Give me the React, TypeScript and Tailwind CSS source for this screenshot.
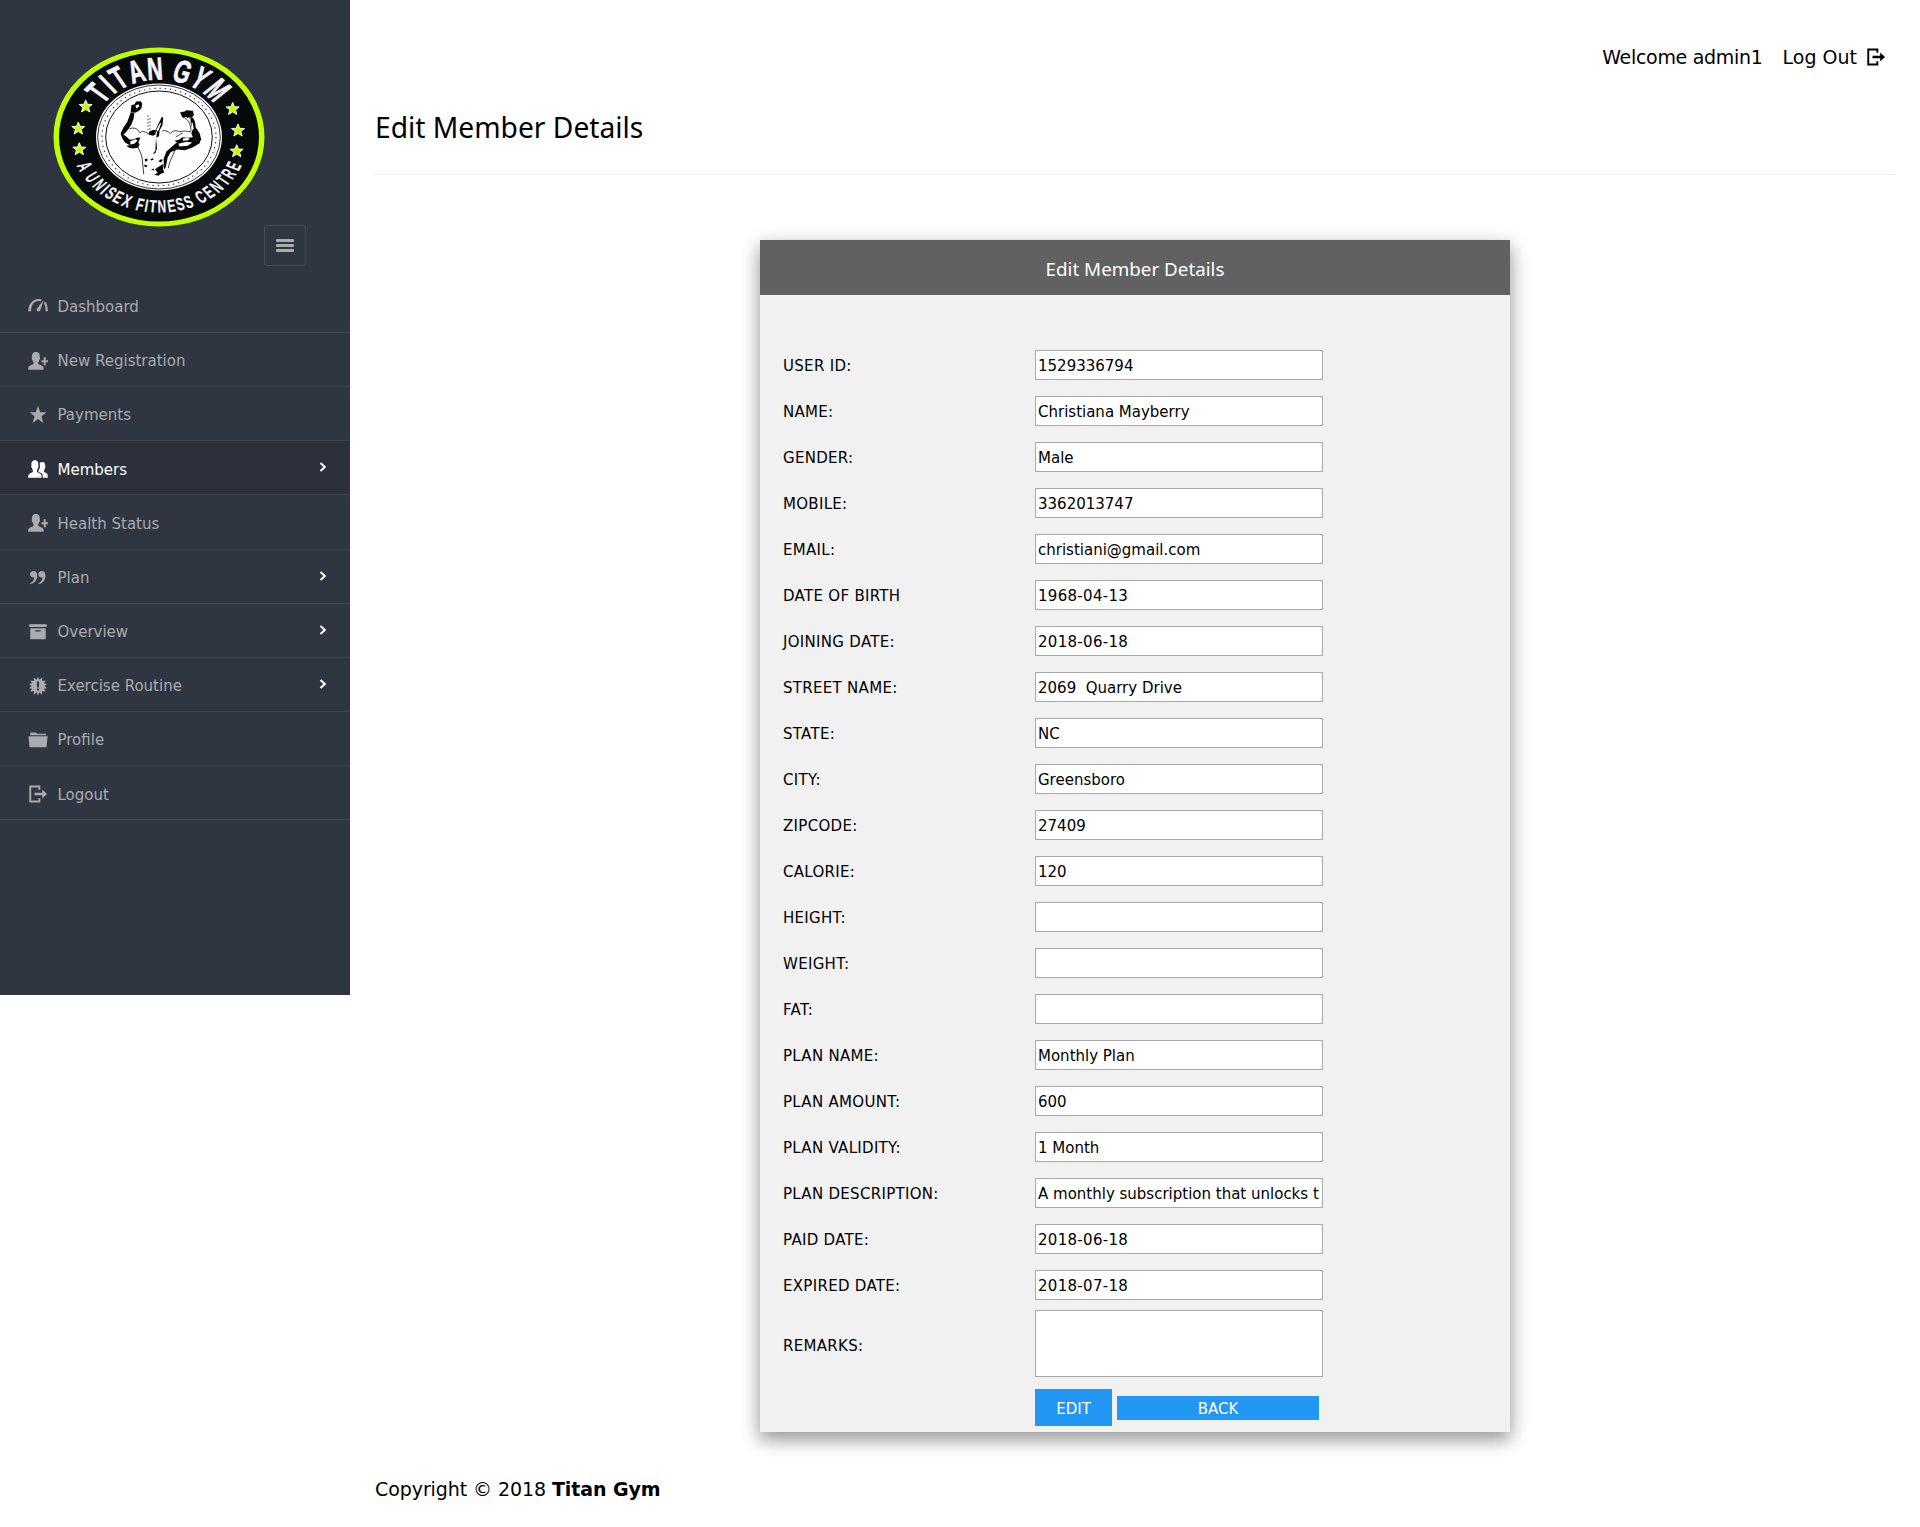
import React from "react";

const VERDANA = "font-['DejaVu_Sans',sans-serif]";

type IconProps = { className?: string };

const glyphs: Record<string, React.ReactNode> = {
  gauge: (
    <>
      <path d="M.3 14.2C.3 7 4.600 2 10.600 2c1.200 0 2.200.1 3.100.4l-1 1.900c-.7-.2-1.300-.2-2-.2-4.600 0-7.500 4-7.700 10.100z" />
      <path d="M15.800 2.700 12.400 13c-.8 2.200-4.300 1.700-3.700-.9z" />
      <path d="M17 4.200c1.800 2.200 2.800 5.500 2.800 10h-2.200c0-3-.4-5.400-1.500-7.400z" />
    </>
  ),
  addUser: (
    <>
      <path d="M.2 18.800c0-2.500 0-3.400 2-4.300 1.900-.9 3.500-1 3.500-2.400 0-.9-.9-1.500-1.200-3C3.700 8.500 3.600 7 4 6.600 3.700 3.600 4.500 1 7.900 1s4.200 2.600 3.900 5.600c.4.4.3 1.900-.5 2.500-.3 1.500-1.200 2.100-1.200 3 0 1.400 1.600 1.500 3.500 2.400 2 .9 2 1.800 2 4.300z" />
      <path d="M15.700 6.300h2v3h2.300v2h-2.300v3h-2v-3h-2.300v-2h2.300z" />
    </>
  ),
  star: <path d="M10 1l2.300 6.300h6.100l-4.900 4 1.800 6.700-5.300-4-5.300 4 1.800-6.700-4.900-4h6.100z" />,
  users: (
    <>
      <path d="M.2 18.800c0-2.500 0-3.400 1.800-4.300 1.600-.9 3-1 3-2.400 0-.9-.8-1.500-1-3C3.200 8.500 3.100 7 3.500 6.600 3.200 3.600 3.900 1.300 6.900 1.300s3.700 2.300 3.400 5.300c.4.4.3 1.900-.5 2.500-.2 1.500-1 2.100-1 3 0 1.400 1.400 1.500 3 2.400 1.800.9 1.800 1.800 1.800 4.300z" />
      <path d="M14.800 18.800h5c0-3-.1-3.700-1.400-4.500-1.300-.8-2.500-.9-2.500-2.200 0-.8.7-1.300.9-2.600.7-.5.7-1.700.4-2.100.3-2.700-.6-4.500-3-4.500-1.200 0-2 .4-2.500 1.100.2 1.200.2 2.600.2 2.800.4 1 .1 2.400-.7 3.200-.2.9-.6 1.600-.9 2.200 0 .8 1.100 1 2.700 1.900 1.600 1 1.800 2 1.800 4.700z" />
    </>
  ),
  quote: (
    <>
      <path d="M5.800 3C3.500 3 2 4.400 2 6.300s1.400 3.200 3.100 3.200c.7 0 1-.1 1.200-.2-.1 2.800-1.600 4.700-4.100 6l.3.900C6.500 15 9.200 12 9.200 7.700 9.200 4.700 7.900 3 5.800 3z" />
      <path d="M14.100 3c-2.300 0-3.800 1.400-3.800 3.300s1.400 3.200 3.100 3.200c.7 0 1-.1 1.200-.2-.1 2.800-1.600 4.700-4.100 6l.3.900c4-1.200 6.700-4.200 6.700-8.500C17.500 4.700 16.200 3 14.100 3z" />
    </>
  ),
  box: (
    <>
      <path d="M1.300 2.200h17.400V5H1.300z" />
      <path fillRule="evenodd" d="M2.300 6.200h15.400v11H2.300zM7.300 8.300v1.300h5.400V8.300z" />
    </>
  ),
  alert: (
    <path
      fillRule="evenodd"
      d="M10 .8l1.300 3L14.200 1.500l-.1 3.600 3.500-.7-1.600 2.900 3 .6-2.500 2.100 2.500 2.200-3 .5 1.600 3-3.500-.6.1 3.600-2.900-2.400L10 19.400l-1.300-3.100-2.900 2.400.1-3.600-3.500.6 1.600-3-3-.5L3.500 10 1 7.900l3-.6-1.600-2.900 3.500.7-.1-3.600 2.900 2.300zM8.800 5.500l.3 6h1.800l.3-6zM9 12.600v2h2v-2z"
    />
  ),
  folder: (
    <>
      <path d="M2 5.200 2.400 2.500h5.200l1.500 1.200h8.600l.5 1.500z" />
      <path d="M.4 6.200h19.200l-1.100 11.100H1.500z" />
    </>
  ),
  logout: (
    <>
      <path d="M1.300 1.500h11v4.300h-1.900V3.400H3.200v13.200h7.200v-2.400h1.900v4.300h-11z" />
      <path d="M14.200 5.600 19 10l-4.800 4.400v-3.200H6.500V8.800h7.700z" />
    </>
  ),
};

function Glyph({ name, className }: IconProps & { name: string }) {
  return (
    <svg viewBox="0 0 20 20" fill="currentColor" className={className}>
      {glyphs[name]}
    </svg>
  );
}

const topLetters: [string, number][] = [
  ["T", -49.5], ["I", -39.5], ["T", -30], ["A", -16.5], ["N", -3],
  ["G", 17], ["Y", 31], ["M", 46.5],
];

const bottomLetters: [string, number][] = [
  ["A", 65], ["U", 54.5], ["N", 46.5], ["I", 41], ["S", 36], ["E", 29.8], ["X", 23],
  ["F", 13.5], ["I", 8.8], ["T", 4.2], ["N", -2], ["E", -8.6], ["S", -14.8], ["S", -21],
  ["C", -30.5], ["E", -37.3], ["N", -44.3], ["T", -51.3], ["R", -58], ["E", -65.5],
];

const stars: [number, number][] = [
  [-73.3, -30.7], [-80.7, -8.7], [-79.7, 12], [73.7, -28.3], [79, -6.7], [77.7, 14],
];

function Physique() {
  return (
    <g transform="translate(-64 -46.500) scale(.33333)" fill="#080808">
      <path d="M107 66l2-22 10-3 4-8 14-1 5 8-3 14-9 8-10 5-8-1z" />
      <path d="M107 66l11 2-2 16-8 22-14 18-14 14-3-10 8-16 12-18z" />
      <path fill="#fdfdfd" d="M121 46l9-5 3 6-8 7zM128 66l4-4-8 24-12 22-10 6 14-22z" />
      <path d="M78 130l10 4 18 10 16-4 14 2-6 14 4 6-6 10-14 2-12-2-8-6 10-2-14-8-8-12z" />
      <path fill="#fdfdfd" d="M92 136l18 2 20 2-14 6-12 2zM106 152l16-6 6 4-10 10-12 2z" />
      <path d="M255 66l16-4 2-3 20 2 4 12-6 8-14 1-4-3-10 3z" />
      <path d="M286 80l8 2 6 12 2 16 12 18 5 20-8 6-16-10-6-16 4-12-6-16z" />
      <path fill="#fdfdfd" d="M289 96l4 1 3 16-4 7z" />
      <path d="M318 144l-4 14-20 12-24 9-24-2-12 6-16 18-6 30-5 6-1-32 8-22 14-12 18-16-8-4 14-3 10-8 14 2 18-2 10 10z" />
      <path fill="#fdfdfd" d="M250 160l24-6 18 2-14 10-24 2zM264 144l20-2-4 7-16 2zM226 186l10-6-12 18-6 4z" />
      <path d="M162 124l13-6 8 2-2 13-9 3-11-5zM181 120l10-22 10-20 4 5-3 22-8 14-2 18-8 5 2-18z" />
      <path fill="#fdfdfd" d="M184 118l12-22 2 4-9 24z" />
      <path d="M180 236l12-8 14-8-2 16 4 10-10 4-8 6-12-3 10-6zM166 206l8-3 2 5-8 2zM149 206l8-2 1 6-7 4zM190 212l8-6 6 2-6 8zM148 222l10 4-4 4-6-2zM168 238l8-4 2 6z" />
      <path d="M183 142l2 20 1 12-5 14-8 2 8-9z" />
      <g fill="none" stroke="#111" strokeWidth="2.400" strokeLinecap="round">
        <path d="M104 115c12-6 24-1 31 12 5-6 15-6 28 5M203 121c9-2 16 1 23 8 8-10 19-10 27-5 12-4 24-2 34 0" />
        <path d="M128 166c4 16 14 26 14 42l4 42M240 178c-6 20-16 30-20 54M262 78c18 8 24 20 26 42M244 138c8-2 10-8 18-10" />
        <path strokeDasharray="2 8" d="M159 76v46M165 84v36" />
      </g>
    </g>
  );
}

function Logo() {
  return (
    <svg viewBox="-106 -90 212 180" className="h-[180px] w-[212px]">
      <ellipse rx="105.500" ry="89.500" fill="#c0ff00" />
      <ellipse rx="100" ry="84.500" fill="#05090a" />
      <ellipse rx="63" ry="53.600" fill="#fdfdfd" />
      <ellipse rx="61.300" ry="52" fill="none" stroke="#222" strokeWidth=".9" />
      <ellipse rx="57" ry="48.700" fill="none" stroke="#333" strokeWidth="1.200" strokeDasharray="1.200 4" />
      <ellipse rx="53.300" ry="46" fill="none" stroke="#111" strokeWidth="1" />
      <g
        transform="scale(1.18 1)"
        fill="#f4f4fa"
        stroke="#f4f4fa"
        fontFamily="'Liberation Sans', sans-serif"
        fontWeight="700"
        textAnchor="middle"
      >
        {topLetters.map(([c, a], i) => (
          <text key={i} fontSize="31.500" strokeWidth=".8" transform={`rotate(${a}) translate(0 -57.500) scale(.58 1)`}>{c}</text>
        ))}
        {bottomLetters.map(([c, a], i) => (
          <text key={i} fontSize="17.500" strokeWidth=".2" transform={`rotate(${a}) translate(0 75.500) scale(.58 1)`}>{c}</text>
        ))}
      </g>
      {stars.map(([x, y], i) => (
        <path
          key={i}
          transform={`translate(${x} ${y})`}
          d="M0-6.300 1.800-2 6.500-1.800 2.900 1.200 4.200 5.700 0 3.200-4.200 5.700-2.900 1.200-6.500-1.800-1.800-2z"
          fill="#c0ff00"
          stroke="#fff"
          strokeWidth=".9"
        />
      ))}
      <Physique />
    </svg>
  );
}

type Item = { icon: string; label: string; arrow?: boolean; active?: boolean };

const menu: Item[] = [
  { icon: "gauge", label: "Dashboard" },
  { icon: "addUser", label: "New Registration" },
  { icon: "star", label: "Payments" },
  { icon: "users", label: "Members", arrow: true, active: true },
  { icon: "addUser", label: "Health Status" },
  { icon: "quote", label: "Plan", arrow: true },
  { icon: "box", label: "Overview", arrow: true },
  { icon: "alert", label: "Exercise Routine", arrow: true },
  { icon: "folder", label: "Profile" },
  { icon: "logout", label: "Logout" },
];

function Sidebar() {
  return (
    <aside className="h-[995px] w-[350px] shrink-0 bg-[#303641]">
      <div className="flex h-[278.6px] pt-[46.5px] pl-[53px]">
        <Logo />
        <button className="mt-[178.5px] -ml-px flex h-[41px] w-[42px] items-center justify-center rounded-[3px] border border-[#454a54]">
          <span className="flex flex-col gap-[2px]">
            <span className="h-[3px] w-[18px] rounded-[1px] bg-[#aaabae]" />
            <span className="h-[3px] w-[18px] rounded-[1px] bg-[#aaabae]" />
            <span className="h-[3px] w-[18px] rounded-[1px] bg-[#aaabae]" />
          </span>
        </button>
      </div>
      <nav>
        {menu.map((m) => (
          <a
            key={m.label}
            className={`flex h-[54.2px] items-center border-b border-[#3f444f] pl-7 pr-[22px] text-[15px] ${
              m.active ? "bg-[#2b303a] text-white" : "text-[#aaabae]"
            }`}
          >
            <Glyph name={m.icon} className="mt-[3px] size-5" />
            <span className="ml-[9.5px] mt-[4px]">{m.label}</span>
            {m.arrow && (
              <svg viewBox="0 0 8 10" className="mr-px mb-px ml-auto h-[10px] w-2" fill="none" stroke="#fff" strokeWidth="2">
                <path d="M1.500 1 5.800 5 1.500 9" />
              </svg>
            )}
          </a>
        ))}
      </nav>
    </aside>
  );
}

const fields: [string, string][] = [
  ["USER ID:", "1529336794"],
  ["NAME:", "Christiana Mayberry"],
  ["GENDER:", "Male"],
  ["MOBILE:", "3362013747"],
  ["EMAIL:", "christiani@gmail.com"],
  ["DATE OF BIRTH", "1968-04-13"],
  ["JOINING DATE:", "2018-06-18"],
  ["STREET NAME:", "2069  Quarry Drive"],
  ["STATE:", "NC"],
  ["CITY:", "Greensboro"],
  ["ZIPCODE:", "27409"],
  ["CALORIE:", "120"],
  ["HEIGHT:", ""],
  ["WEIGHT:", ""],
  ["FAT:", ""],
  ["PLAN NAME:", "Monthly Plan"],
  ["PLAN AMOUNT:", "600"],
  ["PLAN VALIDITY:", "1 Month"],
  ["PLAN DESCRIPTION:", "A monthly subscription that unlocks t"],
  ["PAID DATE:", "2018-06-18"],
  ["EXPIRED DATE:", "2018-07-18"],
];

const isDate = (value: string) => /^\d{4}-\d\d-\d\d$/.test(value);

function MemberForm() {
  return (
    <section className="ml-[385px] mt-[65px] h-[1192px] w-[750px] bg-[#f1f1f1] text-[15px] shadow-[0_8px_16px_0_rgba(0,0,0,0.25),0_6px_20px_0_rgba(0,0,0,0.22)]">
      <h3 className="flex h-[55px] items-center justify-center bg-[#616161] pt-[3px] font-['Noto_Sans',sans-serif] text-[18.8px] text-white">
        Edit Member Details
      </h3>
      <div className="flex flex-col gap-4 pt-[55px] pl-[23px]">
        {fields.map(([label, value]) => (
          <div key={label} className="flex h-[30px] items-center">
            <span className="w-[252px] pt-[2px] text-[15px] tracking-[0.3px]">{label}</span>
            <div
              className={`flex h-[30px] w-[288px] items-center overflow-hidden border border-[#a9a9a9] bg-white pt-[2px] pl-[2px] text-[15px] whitespace-pre ${
                isDate(value) ? "tracking-[0.3px]" : ""
              }`}
            >
              {value}
            </div>
          </div>
        ))}
      </div>
      <div className="mt-[10px] flex items-center pl-[23px]">
        <span className="w-[252px] pt-[5px] text-[15px] tracking-[0.3px]">REMARKS:</span>
        <div className="h-[67px] w-[288px] border border-[#a9a9a9] bg-white" />
      </div>
      <div className="mt-3 ml-[275px] flex items-center gap-[5px] text-white">
        <button className="h-[37px] w-[77px] bg-[#2196f3] pt-[3px]">EDIT</button>
        <button className="mt-px h-6 w-[202px] bg-[#2196f3] pt-[2px]">BACK</button>
      </div>
    </section>
  );
}

export default function App() {
  return (
    <div className={`flex h-[1527px] w-[1920px] overflow-hidden bg-white text-black ${VERDANA}`}>
      <Sidebar />
      <main className="flex-1 pl-[25px]">
        <header className="flex h-[114px] justify-end pt-[43px] pr-[34px] text-[19px] leading-7">
          <span className="tracking-[-0.3px]">Welcome admin1</span>
          <span className="ml-5">Log Out</span>
          <Glyph name="logout" className="mt-[4px] ml-[9px] size-5" />
        </header>
        <h2 className="-mt-[7px] font-['Noto_Sans',sans-serif] text-[28.2px] leading-10 font-normal">Edit Member Details</h2>
        <hr className="mt-[27px] mr-[25px] border-[#eeeeee]" />
        <MemberForm />
        <footer className="mt-[43px] text-[19px] leading-7 tracking-[-0.08px]">
          Copyright © 2018 <b>Titan Gym</b>
        </footer>
      </main>
    </div>
  );
}
